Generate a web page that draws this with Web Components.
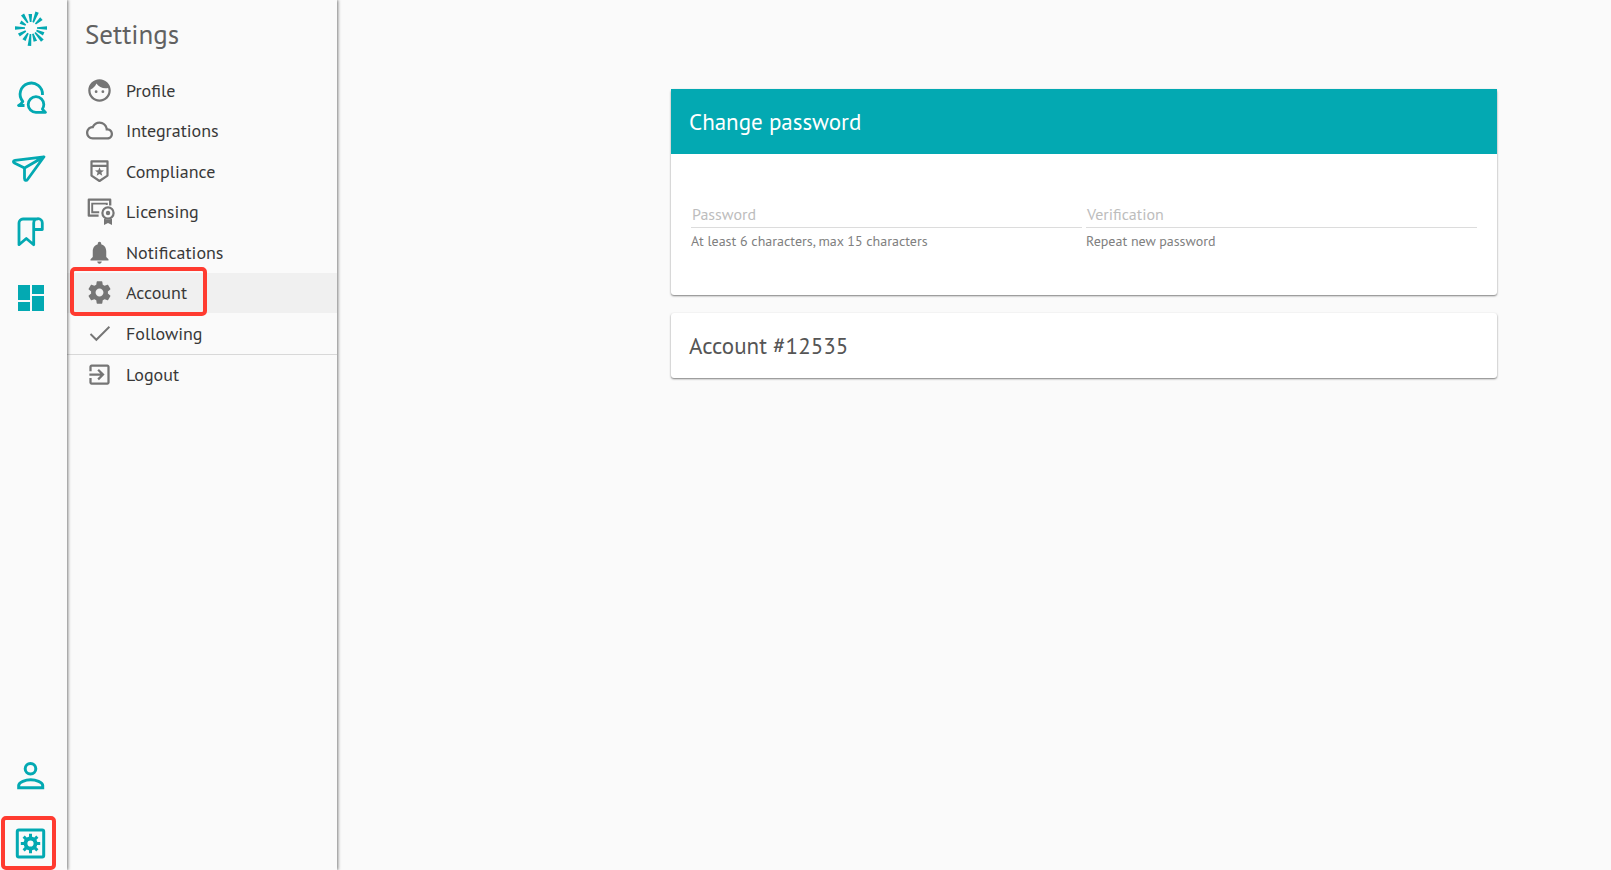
<!DOCTYPE html>
<html lang="en">
<head>
<meta charset="utf-8">
<meta name="viewport" content="width=device-width, initial-scale=1">
<title>Settings</title>
<style>
  body {
    margin: 0;
    background-color: #fafafa;
    font-family: "PT Sans", "Noto Sans", "Open Sans", sans-serif;
    color: #212121;
  }
</style>
</head>
<body>
<settings-app></settings-app>

<script>
const menuIcons = {
  face: '<path d="M9 11.75a1.25 1.25 0 1 0 0 2.5 1.25 1.25 0 0 0 0-2.5zm6 0a1.25 1.25 0 1 0 0 2.5 1.25 1.25 0 0 0 0-2.5zM12 2C6.48 2 2 6.48 2 12s4.48 10 10 10 10-4.48 10-10S17.52 2 12 2zm0 18c-4.41 0-8-3.59-8-8 0-.29.02-.58.05-.86 2.36-1.05 4.23-2.98 5.21-5.37C11.07 8.33 14.05 10 17.42 10c.78 0 1.53-.09 2.25-.26.21.71.33 1.47.33 2.26 0 4.41-3.59 8-8 8z"/>',
  cloud: '<path d="M19.35 10.04C18.67 6.59 15.64 4 12 4 9.11 4 6.6 5.64 5.35 8.04 2.34 8.36 0 10.91 0 14c0 3.31 2.69 6 6 6h13c2.76 0 5-2.24 5-5 0-2.64-2.05-4.78-4.65-4.96zM19 18H6c-2.21 0-4-1.79-4-4s1.79-4 4-4h.71C7.37 7.69 9.48 6 12 6c3.04 0 5.5 2.46 5.5 5.5v.5H19c1.66 0 3 1.34 3 3s-1.34 3-3 3z"/>',
  shield: '<g transform="scale(.889)"><path fill="none" stroke="currentColor" stroke-width="2.2" stroke-linejoin="round" d="M5.5 3.4h16v14.2l-8 5.4-8-5.4zM5.5 7.8h16"/><path d="M13.5 9.2l1.2 3.1 3.3.2-2.6 2.1.9 3.2-2.8-1.8-2.8 1.8.9-3.2L9 12.5l3.3-.2z"/></g>',
  license: '<g transform="scale(.889)"><path fill="none" stroke="currentColor" stroke-width="2.3" stroke-linejoin="round" d="M24.2 7.5V1.7H2.8v16h9.8"/><path fill="none" stroke="currentColor" stroke-width="1.9" d="M20.8 7V5.6H6.2v8.6h7"/><circle cx="22" cy="15" r="5.6" fill="none" stroke="currentColor" stroke-width="2.2"/><circle cx="22" cy="15" r="2.2"/><path d="M18 20.4c2.5 1.4 5.5 1.4 8 0V27l-4-2-4 2z"/></g>',
  bell: '<path d="M12 22c1.1 0 2-.9 2-2h-4c0 1.1.89 2 2 2zm6-6v-5c0-3.07-1.64-5.64-4.5-6.32V4c0-.83-.67-1.5-1.5-1.5s-1.5.67-1.5 1.5v.68C7.63 5.36 6 7.92 6 11v5l-2 2v1h16v-1l-2-2z"/>',
  gear: '<path d="M19.43 12.98c.04-.32.07-.64.07-.98s-.03-.66-.07-.98l2.11-1.65c.19-.15.24-.42.12-.64l-2-3.46c-.12-.22-.39-.3-.61-.22l-2.49 1c-.52-.4-1.08-.73-1.69-.98l-.38-2.65C14.46 2.18 14.25 2 14 2h-4c-.25 0-.46.18-.49.42l-.38 2.65c-.61.25-1.17.59-1.69.98l-2.49-1c-.23-.09-.49 0-.61.22l-2 3.46c-.13.22-.07.49.12.64l2.11 1.65c-.04.32-.07.65-.07.98s.03.66.07.98l-2.11 1.65c-.19.15-.24.42-.12.64l2 3.46c.12.22.39.3.61.22l2.49-1c.52.4 1.08.73 1.69.98l.38 2.65c.03.24.24.42.49.42h4c.25 0 .46-.18.49-.42l.38-2.65c.61-.25 1.17-.59 1.69-.98l2.49 1c.23.09.49 0 .61-.22l2-3.46c.12-.22.07-.49-.12-.64l-2.11-1.65zM12 15.5c-1.93 0-3.5-1.57-3.5-3.5s1.57-3.5 3.5-3.5 3.5 1.57 3.5 3.5-1.57 3.5-3.5 3.5z"/>',
  check: '<path fill="none" stroke="currentColor" stroke-width="1.7" d="M4 12.4l5.2 5.2L20.8 6"/>',
  exit: '<path d="M10.09 15.59L11.5 17l5-5-5-5-1.41 1.41L12.67 11H3v2h9.67l-2.58 2.59zM19 3H5c-1.11 0-2 .9-2 2v4h2V5h14v14H5v-4H3v4c0 1.1.89 2 2 2h14c1.1 0 2-.9 2-2V5c0-1.1-.9-2-2-2z"/>'
};

// angle and outer radius of every ray in the logo
const rays = [[0, 16], [25, 14], [48, 17], [72, 14], [95, 18], [120, 14], [150, 14], [180, 16], [209, 12], [238, 16], [267, 14], [291, 17], [318, 14]];

// rail icons are drawn on a 40 x 40 grid
const railIcons = {
  logo: rays.map(([angle, r]) => `<path fill="currentColor" stroke="none" transform="translate(20 19) rotate(${angle})" d="M6-.8L${r}-1.8v3.6L6 .8z"/>`).join(''),
  chat: '<path d="M31.5 17A11.2 11.2 0 1 0 11.8 23.500q-1.500 2.700-4.300 4H13.500"/><path d="M34.500 34.300H25A7.800 7.800 0 1 1 32.800 26.500c0 2-.5 3.300-1.400 4.500q1.200 2 3.100 3.300z"/>',
  send: '<path d="M33 11.8L4 15.3c-2 .3-2 1.9-.6 2.600L13.500 23zM13.500 23v10.500c0 2 2 2.500 3 1L33 11.800"/>',
  bookmark: '<path d="M27 7H12a4 4 0 0 0-4 4v21.7l7.3-6.2 7.4 6.2V11a4.3 4.3 0 0 1 8.6 0V17.5h-8.6"/>',
  board: '<path fill="currentColor" stroke="none" d="M7 6h12v15H7zM7 23h12v9H7zM21 6h12v9H21zM21 17h12v15H21z"/>',
  person: '<circle cx="19.5" cy="12.7" r="5.3" stroke-width="3"/><path stroke-linejoin="miter" stroke-width="3" d="M7.7 31.7h24v-2.2c0-3.5-7-5.7-12-5.7s-12 2.2-12 5.7z"/>',
  cog: '<rect x="6.3" y="7" width="26.4" height="27" rx="1.5" stroke-width="3"/><circle cx="19.5" cy="20.5" r="5" stroke-width="3.8"/>' +
    [0, 45, 90, 135].map(angle => `<path stroke-width="3" transform="rotate(${angle} 19.5 20.5)" d="M9.8 20.5H14M25 20.5h4.2"/>`).join('')
};

class RailLink extends HTMLElement {

  constructor() {
    super();
    this.attachShadow({mode: 'open'});
  }

  connectedCallback() {
    this.shadowRoot.innerHTML = `
      <style>
        :host {
          display: block;
          position: relative;
          height: 67px;
          color: #03a9b2;
        }
        :host([marked]) {
          height: 54px;
        }
        :host([marked])::after {
          content: "";
          position: absolute;
          box-sizing: border-box;
          top: 0;
          left: 1px;
          width: 55px;
          height: 54px;
          border: 4px solid #ff3b30;
          border-radius: 5px;
          pointer-events: none;
        }
        a {
          display: flex;
          align-items: center;
          justify-content: center;
          width: 62px;
          height: 100%;
          color: inherit;
        }
        svg {
          width: 40px;
          height: 40px;
          fill: none;
          stroke: currentColor;
          stroke-width: 2.8;
          stroke-linejoin: round;
        }
      </style>
      <a href="#${this.getAttribute('icon')}" aria-label="${this.getAttribute('label')}">
        <svg viewBox="0 0 40 40" aria-hidden="true">${railIcons[this.getAttribute('icon')]}</svg>
      </a>
    `;
  }
}

customElements.define('rail-link', RailLink);

class NavRail extends HTMLElement {

  constructor() {
    super();
    this.attachShadow({mode: 'open'}).innerHTML = `
      <style>
        :host {
          display: block;
          position: relative;
          z-index: 2;
          background-color: #fafafa;
          box-shadow: 1px 0 3px rgba(0, 0, 0, 0.5);
        }
        nav {
          display: flex;
          flex-direction: column;
          height: 100%;
        }
        .logo {
          height: 58px;
          margin-bottom: 6px;
        }
        .person {
          margin-top: auto;
          margin-bottom: 7px;
        }
      </style>
      <nav aria-label="Main">
        <rail-link class="logo" icon="logo" label="Home"></rail-link>
        <rail-link icon="chat" label="Conversations"></rail-link>
        <rail-link icon="send" label="Publish"></rail-link>
        <rail-link icon="bookmark" label="Saved"></rail-link>
        <rail-link icon="board" label="Dashboard"></rail-link>
        <rail-link class="person" icon="person" label="Profile"></rail-link>
        <rail-link icon="cog" label="Settings" marked></rail-link>
      </nav>
    `;
  }
}

customElements.define('nav-rail', NavRail);

class MenuItem extends HTMLElement {

  constructor() {
    super();
    this.attachShadow({mode: 'open'});
  }

  connectedCallback() {
    this.shadowRoot.innerHTML = `
      <style>
        :host {
          display: block;
          position: relative;
        }
        :host([divided]) {
          border-top: 1px solid #d8d8d8;
        }
        :host([active]) {
          background-color: #f0f0f0;
        }
        :host([active])::after {
          content: "";
          position: absolute;
          box-sizing: border-box;
          top: -6px;
          left: 3px;
          width: 137px;
          height: 49px;
          border: 4px solid #ff3b30;
          border-radius: 5px;
          pointer-events: none;
        }
        a {
          display: flex;
          align-items: center;
          gap: 13px;
          height: 100%;
          padding-left: 19px;
          color: #383838;
          font-size: 18px;
          font-weight: 300;
          text-decoration: none;
        }
        svg {
          flex: none;
          width: 27px;
          height: 27px;
          fill: currentColor;
          color: #757575;
          overflow: visible;
        }
      </style>
      <a href="#${this.getAttribute('icon')}">
        <svg viewBox="0 0 24 24" aria-hidden="true">${menuIcons[this.getAttribute('icon')]}</svg>
        <slot></slot>
      </a>
    `;
  }
}

customElements.define('menu-item', MenuItem);

class SettingsMenu extends HTMLElement {

  constructor() {
    super();
    this.attachShadow({mode: 'open'}).innerHTML = `
      <style>
        :host {
          display: block;
          position: relative;
          z-index: 1;
          background-color: #fafafa;
          box-shadow: 1px 0 3px rgba(0, 0, 0, 0.5);
        }
        h1 {
          margin: 0;
          padding: 0 18px 2px;
          color: #616161;
          font-size: 27px;
          font-weight: 400;
          line-height: 68px;
        }
        nav {
          display: grid;
          grid-auto-rows: 1fr;
          height: 324px;
        }
      </style>
      <h1>Settings</h1>
      <nav aria-label="Settings">
        <menu-item icon="face">Profile</menu-item>
        <menu-item icon="cloud">Integrations</menu-item>
        <menu-item icon="shield">Compliance</menu-item>
        <menu-item icon="license">Licensing</menu-item>
        <menu-item icon="bell">Notifications</menu-item>
        <menu-item icon="gear" active>Account</menu-item>
        <menu-item icon="check">Following</menu-item>
        <menu-item icon="exit" divided>Logout</menu-item>
      </nav>
    `;
  }
}

customElements.define('settings-menu', SettingsMenu);

class PanelCard extends HTMLElement {

  constructor() {
    super();
    this.attachShadow({mode: 'open'}).innerHTML = `
      <style>
        :host {
          display: block;
          border-radius: 3px;
          background-color: #fff;
          box-shadow: 0 1px 2px rgba(0, 0, 0, 0.5);
        }
        h2 {
          margin: 0;
          padding: 0 18px;
          color: #555;
          font-size: 23px;
          font-weight: 400;
          line-height: 65px;
        }
        :host([primary]) h2 {
          background-color: #03a9b2;
          color: #fff;
        }
      </style>
      <h2><slot name="title"></slot></h2>
      <slot></slot>
    `;
  }
}

customElements.define('panel-card', PanelCard);

class PasswordField extends HTMLElement {

  constructor() {
    super();
    this.attachShadow({mode: 'open'});
  }

  connectedCallback() {
    this.shadowRoot.innerHTML = `
      <style>
        :host {
          display: block;
        }
        .box {
          display: grid;
          border-bottom: 1px solid #dcdcdc;
        }
        /* the label lies in the same cell as the input until there is a value */
        label, input {
          grid-area: 1 / 1;
          box-sizing: border-box;
          height: 26px;
          padding: 0 1px;
          font: inherit;
          font-size: 16px;
          line-height: 26px;
        }
        label {
          color: #bdbdbd;
          pointer-events: none;
        }
        input {
          width: 100%;
          border: 0;
          outline: 0;
          background: none;
        }
        input:not(:placeholder-shown) + label {
          visibility: hidden;
        }
        p {
          margin: 3px 0 0;
          color: #808080;
          font-size: 14px;
          line-height: 20px;
        }
      </style>
      <div class="box">
        <input id="field" type="password" placeholder=" " maxlength="15" aria-describedby="hint">
        <label for="field">${this.getAttribute('label')}</label>
      </div>
      <p id="hint"><slot></slot></p>
    `;
  }
}

customElements.define('password-field', PasswordField);

class SettingsApp extends HTMLElement {

  constructor() {
    super();
    this.attachShadow({mode: 'open'}).innerHTML = `
      <style>
        :host {
          display: grid;
          grid-template-columns: 67px 270px 1fr;
          min-height: 100vh;
        }
        main {
          display: flex;
          flex-direction: column;
          gap: 18px;
          box-sizing: border-box;
          width: 100%;
          max-width: 940px;
          margin-left: auto;
          padding: 89px 114px 0 0;
        }
        form {
          display: grid;
          grid-template-columns: 1fr 1fr;
          gap: 4px;
          padding: 47px 20px 44px;
        }
      </style>
      <nav-rail></nav-rail>
      <settings-menu></settings-menu>
      <main>
        <panel-card primary>
          <span slot="title">Change password</span>
          <form>
            <password-field label="Password">At least 6 characters, max 15 characters</password-field>
            <password-field label="Verification">Repeat new password</password-field>
          </form>
        </panel-card>
        <panel-card>
          <span slot="title">Account #12535</span>
        </panel-card>
      </main>
    `;
  }
}

customElements.define('settings-app', SettingsApp);
</script>
</body>
</html>
